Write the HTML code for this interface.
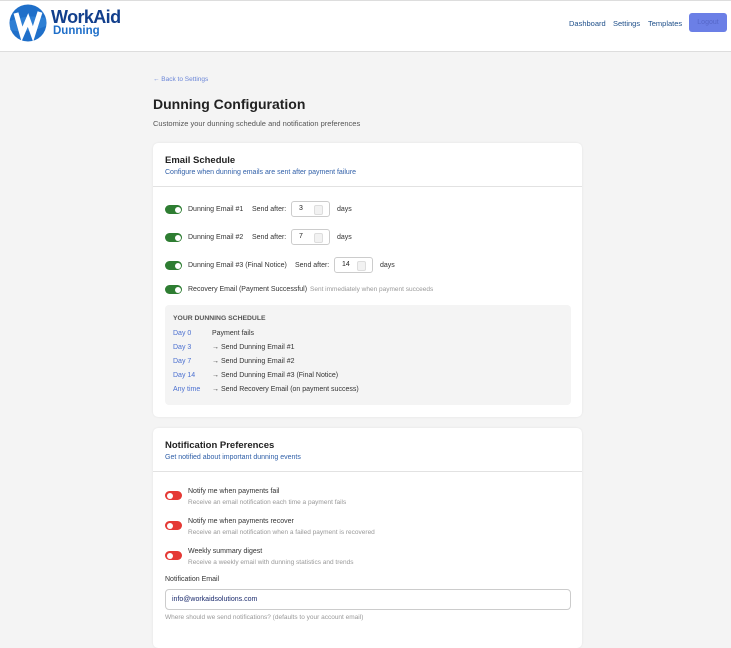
<!DOCTYPE html>
<html><head><meta charset="utf-8"><style>
*{box-sizing:border-box;margin:0;padding:0}
body{width:731px;height:627px;overflow:hidden;background:#f4f4f4;font-family:"Liberation Sans",sans-serif;color:#333;font-size:7px}
.hdr{position:absolute;left:0;top:0;width:731px;height:52px;background:#fff;border-top:1px solid #ddd;border-bottom:1px solid #ddd}
.nav{position:absolute;top:18px;font-size:7.5px;color:#1e4f8a}
.logout{position:absolute;left:689px;top:12px;width:38px;height:19px;background:#6b7fe6;border-radius:3px;color:#5667c8;font-size:7px;text-align:center;line-height:19px}
.back{position:absolute;left:153px;top:76px;color:#6b86d8;font-size:6.5px}
h1{position:absolute;left:153px;top:96px;font-size:14px;font-weight:bold;color:#222}
.sub{position:absolute;left:153px;top:119px;font-size:7.5px;color:#555}
.card{position:absolute;left:153px;width:429px;background:#fff;border-radius:5px;box-shadow:0 0 2px rgba(0,0,0,.08)}
.ct{position:absolute;left:12px;font-size:9.5px;font-weight:bold;color:#222}
.cs{position:absolute;left:12px;font-size:7px;color:#2f5fa8}
.line{position:absolute;left:0;width:429px;border-top:1px solid #e2e2e2}
.tg{position:absolute;left:12px;width:17px;height:9px;border-radius:5px;background:#2e7d32}
.tg:after{content:"";position:absolute;right:1.5px;top:1.5px;width:6px;height:6px;border-radius:50%;background:#fff}
.tg.r{background:#e53935}.tg.r:after{right:auto;left:1.5px}
.t{position:absolute;font-size:7px;color:#333;white-space:nowrap}
.g{color:#999}
.inp{position:absolute;width:39px;height:16px;border:1px solid #ccc;border-radius:3px;background:#fff;font-size:7px;padding-left:7px;line-height:14px;color:#222}
.inp:after{content:"";position:absolute;right:6px;top:3px;width:7px;height:8px;border:1px solid #ddd;border-radius:2px;background:#f2f2f2}
.sched{position:absolute;left:12px;top:162px;width:406px;height:100px;background:#f4f4f4;border-radius:4px}
.sd{position:absolute;left:8px;font-size:7px;color:#4a6fd0}
.sa{position:absolute;left:47px;font-size:7px;color:#333}
</style></head><body>
<div class="hdr">
<svg style="position:absolute;left:9px;top:3px" width="38" height="38" viewBox="0 0 38 38"><circle cx="19" cy="19" r="18.5" fill="#1f6fc9"/><path d="M1 17 Q19 10 37 14 L37 22 Q19 30 1 26Z" fill="#3d8fe0" opacity=".5"/><path d="M7 9 L13 30 L19 16 L24 30 L31 8" stroke="#fff" stroke-width="5" fill="none" stroke-linejoin="miter"/></svg>
<div style="position:absolute;left:51px;top:6px;font-size:18px;font-weight:bold;color:#123f8c;letter-spacing:-.6px">WorkAid</div>
<div style="position:absolute;left:53px;top:24px;font-size:11.5px;font-weight:bold;color:#1f6fc9">Dunning</div>
<div class="nav" style="left:569px">Dashboard</div>
<div class="nav" style="left:613px">Settings</div>
<div class="nav" style="left:648px">Templates</div>
<div class="logout">Logout</div>
</div>
<div class="back">← Back to Settings</div>
<h1>Dunning Configuration</h1>
<div class="sub">Customize your dunning schedule and notification preferences</div>

<div class="card" style="top:143px;height:274px">
<div class="ct" style="top:12px">Email Schedule</div>
<div class="cs" style="top:26px">Configure when dunning emails are sent after payment failure</div>
<div class="line" style="top:43px"></div>
<div class="tg" style="top:62px"></div><div class="t" style="left:35px;top:63px">Dunning Email #1</div><div class="t" style="left:99px;top:63px">Send after:</div><div class="inp" style="left:138px;top:58px">3</div><div class="t" style="left:184px;top:63px">days</div>
<div class="tg" style="top:90px"></div><div class="t" style="left:35px;top:91px">Dunning Email #2</div><div class="t" style="left:99px;top:91px">Send after:</div><div class="inp" style="left:138px;top:86px">7</div><div class="t" style="left:184px;top:91px">days</div>
<div class="tg" style="top:118px"></div><div class="t" style="left:35px;top:119px">Dunning Email #3 (Final Notice)</div><div class="t" style="left:142px;top:119px">Send after:</div><div class="inp" style="left:181px;top:114px">14</div><div class="t" style="left:227px;top:119px">days</div>
<div class="tg" style="top:142px"></div><div class="t" style="left:35px;top:143px">Recovery Email (Payment Successful)</div><div class="t g" style="left:157px;top:143px;font-size:6.5px">Sent immediately when payment succeeds</div>
<div class="sched">
<div class="t" style="left:8px;top:10px;font-weight:bold;color:#555;font-size:6.8px">YOUR DUNNING SCHEDULE</div>
<div class="sd" style="top:25px">Day 0</div><div class="sa" style="top:25px">Payment fails</div>
<div class="sd" style="top:39px">Day 3</div><div class="sa" style="top:39px">→ Send Dunning Email #1</div>
<div class="sd" style="top:53px">Day 7</div><div class="sa" style="top:53px">→ Send Dunning Email #2</div>
<div class="sd" style="top:67px">Day 14</div><div class="sa" style="top:67px">→ Send Dunning Email #3 (Final Notice)</div>
<div class="sd" style="top:81px">Any time</div><div class="sa" style="top:81px">→ Send Recovery Email (on payment success)</div>
</div>
</div>

<div class="card" style="top:428px;height:220px">
<div class="ct" style="top:12px">Notification Preferences</div>
<div class="cs" style="top:26px">Get notified about important dunning events</div>
<div class="line" style="top:43px"></div>
<div class="tg r" style="top:63px"></div><div class="t" style="left:35px;top:60px">Notify me when payments fail</div><div class="t g" style="left:35px;top:71px;font-size:6.5px">Receive an email notification each time a payment fails</div>
<div class="tg r" style="top:93px"></div><div class="t" style="left:35px;top:90px">Notify me when payments recover</div><div class="t g" style="left:35px;top:101px;font-size:6.5px">Receive an email notification when a failed payment is recovered</div>
<div class="tg r" style="top:123px"></div><div class="t" style="left:35px;top:120px">Weekly summary digest</div><div class="t g" style="left:35px;top:131px;font-size:6.5px">Receive a weekly email with dunning statistics and trends</div>
<div class="t" style="left:12px;top:148px">Notification Email</div>
<div style="position:absolute;left:12px;top:161px;width:406px;height:21px;border:1px solid #ccc;border-radius:4px;font-size:7px;color:#1a2a6c;padding-left:6px;line-height:19px">info@workaidsolutions.com</div>
<div class="t g" style="left:12px;top:186px;font-size:6.5px">Where should we send notifications? (defaults to your account email)</div>
</div>
</body></html>
